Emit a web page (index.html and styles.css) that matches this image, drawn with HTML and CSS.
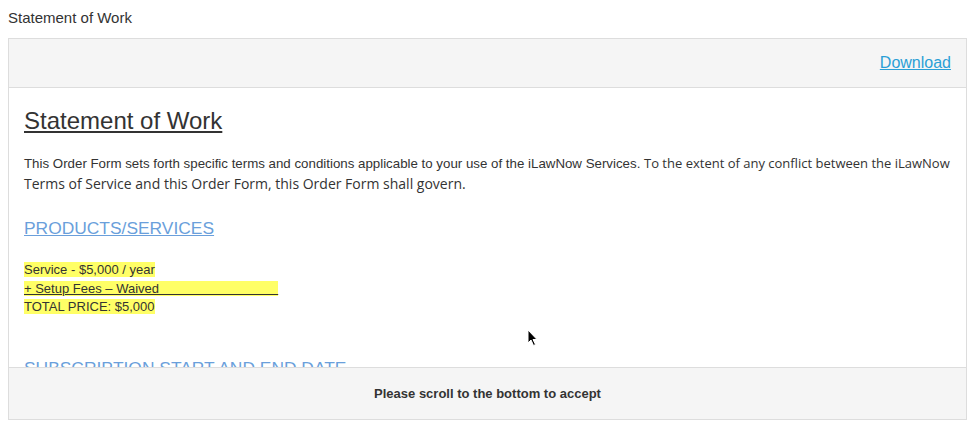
FILE: index.html
```html
<!DOCTYPE html>
<html lang="en">
<head>
    <meta charset="UTF-8">
    <title>Statement of Work</title>
    <link rel="stylesheet" href="styles.css">
</head>
<body>
    <div class="page-title">Statement of Work</div>
    <div class="panel">
        <div class="panel-head">
            <a href="#" class="download">Download</a>
        </div>
        <div class="panel-body">
            <h1 class="doc-title">Statement of Work</h1>
            <p class="intro"><span class="plain">This Order Form sets forth specific terms and conditions applicable to your use of the iLawNow Services.</span> <span class="small">To the extent of any conflict between the iLawNow</span> Terms of Service and this Order Form, this Order Form shall govern.</p>
            <h2 class="section">PRODUCTS/SERVICES</h2>
            <div class="pricing">
                <div><span class="mark">Service - $5,000 / year</span></div>
                <div><span class="mark under">+ Setup Fees &ndash; Waived&nbsp;&nbsp;&nbsp;&nbsp;&nbsp;&nbsp;&nbsp;&nbsp;&nbsp;&nbsp;&nbsp;&nbsp;&nbsp;&nbsp;&nbsp;&nbsp;&nbsp;&nbsp;&nbsp;&nbsp;&nbsp;&nbsp;&nbsp;&nbsp;&nbsp;&nbsp;&nbsp;&nbsp;&nbsp;&nbsp;&nbsp;&nbsp;&nbsp;</span></div>
                <div><span class="mark">TOTAL PRICE: $5,000</span></div>
            </div>
            <h2 class="section next">SUBSCRIPTION START AND END DATE</h2>
        </div>
        <div class="panel-foot">Please scroll to the bottom to accept</div>
        <!-- mouse pointer in the screenshot -->
        <svg class="cursor" width="12" height="18" viewBox="0 0 12 18">
            <path d="M1 1 L1 14 L4 11 L6.5 16.5 L8.5 15.5 L6 10.5 L10 10.5 Z" fill="#000" stroke="#fff" stroke-width="1"/>
        </svg>
    </div>
</body>
</html>
```

FILE: styles.css
```css
body {
    font-family: "Liberation Sans", Arial, sans-serif;
    color: #333333;
    margin: 8px;
    background-color: #ffffff;
}

.page-title {
    font-size: 15px;
    line-height: 20px;
    margin-bottom: 10px;
}

.panel {
    position: relative;
    width: 957px;
    border: 1px solid #dddddd;
}

.panel-head {
    background-color: #f5f5f5;
    border-bottom: 1px solid #dddddd;
    padding: 15px 15px 15px;
    text-align: right;
    line-height: 18px;
}

.download {
    color: #2a9fd6;
    font-size: 16px;
}

.panel-body {
    height: 279px;
    overflow: hidden;
    padding: 20px 15px 0;
    box-sizing: border-box;
}

.doc-title {
    margin: 0;
    font-size: 24px;
    font-weight: normal;
    line-height: 26px;
    text-decoration: underline;
}

.intro {
    font-family: "Open Sans", sans-serif;
    font-size: 14px;
    line-height: 20px;
    margin: 19px 0 0;
}

.intro .plain {
    font-family: "Liberation Sans", Arial, sans-serif;
    font-size: 13.3px;
}

.intro .small {
    font-size: 13px;
}

.section {
    margin: 24px 0 0;
    font-size: 17.4px;
    font-weight: normal;
    line-height: 20px;
    color: #6a9fdb;
    text-decoration: underline;
}

.section.next {
    margin-top: 41px;
}

.pricing {
    margin-top: 23px;
    font-size: 13px;
    line-height: 18.5px;
}

.mark {
    background-color: #ffff66;
}

.under {
    text-decoration: underline;
}

.panel-foot {
    background-color: #f5f5f5;
    border-top: 1px solid #dddddd;
    padding: 17px 15px;
    text-align: center;
    font-size: 13px;
    font-weight: bold;
    line-height: 17px;
}

.cursor {
    position: absolute;
    left: 518px;
    top: 290px;
}
```
